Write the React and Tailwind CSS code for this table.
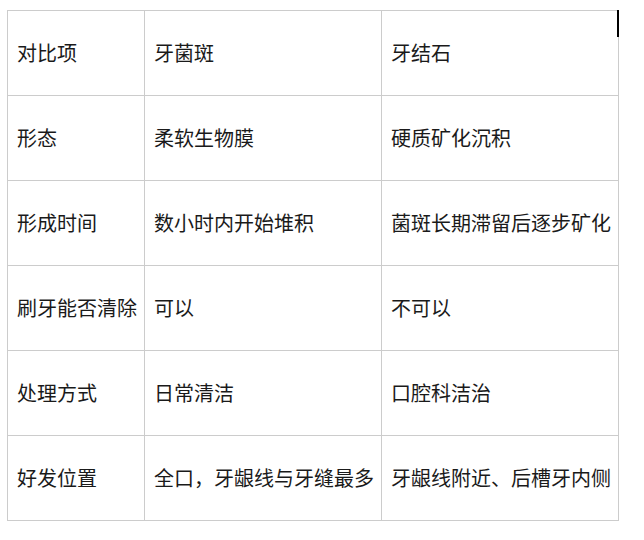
import React from "react";

const rows = [
  ["对比项", "牙菌斑", "牙结石"],
  ["形态", "柔软生物膜", "硬质矿化沉积"],
  ["形成时间", "数小时内开始堆积", "菌斑长期滞留后逐步矿化"],
  ["刷牙能否清除", "可以", "不可以"],
  ["处理方式", "日常清洁", "口腔科洁治"],
  ["好发位置", "全口，牙龈线与牙缝最多", "牙龈线附近、后槽牙内侧"],
];

export default function App() {
  return (
    <div
      className="relative w-[644px] h-[540px] bg-white overflow-hidden"
      style={{ fontFamily: '"Microsoft YaHei", "Noto Sans CJK SC", "Noto Sans", sans-serif' }}
    >
      <div className="ml-[7px] pt-[10px]">
        <div className="grid grid-cols-[137px_237px_237px] auto-rows-[85px] w-max border-l border-t border-[#cccccc]">
          {rows.flatMap((r, i) =>
            r.map((c, j) => (
              <div
                key={i + "-" + j}
                className="flex items-center pl-[9px] border-r border-b border-[#cccccc] text-[20px] leading-none text-[#1a1a1a] whitespace-nowrap"
              >
                {c}
              </div>
            ))
          )}
        </div>
      </div>
      <div className="absolute left-[617px] top-[10px] w-[2px] h-[27px] bg-black" />
    </div>
  );
}
